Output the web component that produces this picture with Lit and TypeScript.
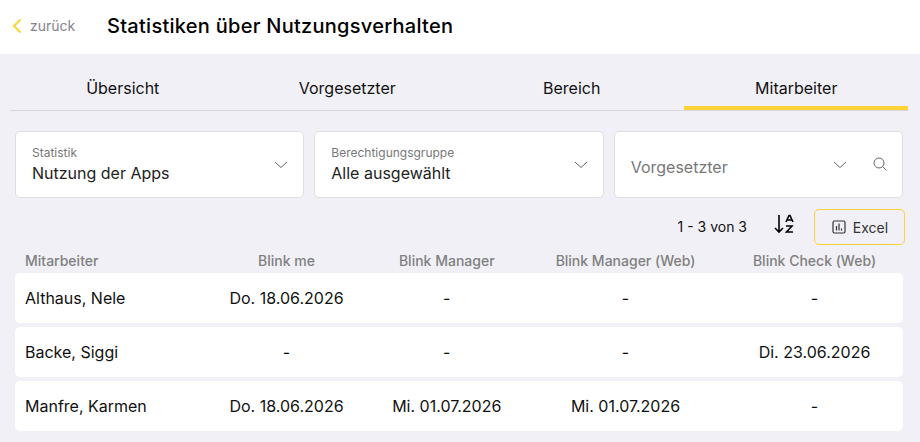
import { LitElement, html, css } from 'lit';
import { customElement } from 'lit/decorators.js';

@customElement('app-root')
export class AppRoot extends LitElement {
  private tabs = ['Übersicht', 'Vorgesetzter', 'Bereich', 'Mitarbeiter'];

  private columns = ['Mitarbeiter', 'Blink me', 'Blink Manager', 'Blink Manager (Web)', 'Blink Check (Web)'];

  private rows = [
    ['Althaus, Nele', 'Do. 18.06.2026', '-', '-', '-'],
    ['Backe, Siggi', '-', '-', '-', 'Di. 23.06.2026'],
    ['Manfre, Karmen', 'Do. 18.06.2026', 'Mi. 01.07.2026', 'Mi. 01.07.2026', '-'],
  ];

  static styles = css`
    :host {
      display: block;
      box-sizing: border-box;
      height: 442px;
      overflow: hidden;
      background: #f1f0f6;
      color: #111;
      font-family: Inter, 'Liberation Sans', sans-serif;
      font-size: 16px;
    }

    * {
      box-sizing: border-box;
    }

    svg {
      display: block;
      fill: none;
    }

    header {
      display: flex;
      align-items: center;
      height: 54px;
      padding: 0 12px 2px;
      background: #fff;
    }

    .back {
      display: flex;
      align-items: center;
      gap: 8px;
      width: 95px;
      padding-bottom: 1px;
      color: #84848c;
      font-size: 14px;
    }

    h1 {
      margin: 0;
      font-size: 20px;
      font-weight: 500;
      line-height: 24px;
      letter-spacing: 0.27px;
      color: #000;
    }

    nav {
      display: grid;
      grid-template-columns: repeat(4, 1fr);
      height: 57px;
      margin: 0 12px 0 10px;
      border-bottom: 1px solid #d5d5da;
    }

    .tab {
      display: flex;
      align-items: center;
      justify-content: center;
      height: 56px;
      padding: 12px 0 0 1px;
      border-bottom: 0 solid #ffd236;
    }

    .tab.active {
      padding-top: 16px;
      border-bottom-width: 4px;
    }

    .filters {
      display: grid;
      grid-template-columns: repeat(3, 1fr);
      gap: 10px;
      padding: 20px 17px 0 15px;
    }

    .field {
      display: flex;
      align-items: center;
      height: 67px;
      padding: 0 15px 0 16px;
      border: 1px solid #dfdfe1;
      border-radius: 5px;
      background: #fff;
    }

    .text {
      flex: 1;
    }

    .label {
      color: #777;
      font-size: 12px;
      line-height: 16px;
    }

    .value {
      color: #222;
      line-height: 24px;
    }

    .placeholder {
      flex: 1;
      padding-top: 5px;
      color: #777;
    }

    .search {
      margin: 0 -1px 2px 25px;
    }

    .toolbar {
      display: flex;
      align-items: center;
      justify-content: flex-end;
      height: 36px;
      margin-top: 11px;
      padding-right: 15px;
      font-size: 14px;
    }

    .count {
      padding-bottom: 2px;
    }

    .sort {
      margin: 0 20px 6px 27px;
    }

    .excel {
      display: flex;
      align-items: center;
      justify-content: center;
      gap: 7px;
      width: 91px;
      height: 36px;
      padding-left: 1px;
      border: 1px solid #ffd236;
      border-radius: 5px;
      color: #333;
    }

    .table {
      display: grid;
      gap: 4px;
      padding: 4px 17px 0 15px;
    }

    .row {
      display: grid;
      grid-template-columns: 191.5px 160px 160.5px 197px 179px;
      align-items: center;
      height: 50px;
      border-radius: 5px;
      background: #fff;
      text-align: center;
    }

    .row :first-child {
      padding-left: 10px;
      text-align: left;
    }

    .row :last-child {
      padding-left: 2px;
    }

    .row.head {
      height: 24px;
      margin-bottom: -4px;
      padding-bottom: 2px;
      background: none;
      color: #808080;
      font-size: 14px;
      font-weight: 500;
    }
  `;

  private _chevron() {
    return html`<svg width="14" height="8" viewBox="0 0 14 8" stroke="#666">
      <path d="M1 1l6 5.5L13 1" />
    </svg>`;
  }

  private _select(label: string, value: string) {
    return html`
      <div class="field">
        <div class="text">
          <div class="label">${label}</div>
          <div class="value">${value}</div>
        </div>
        ${this._chevron()}
      </div>
    `;
  }

  render() {
    return html`
      <header>
        <div class="back">
          <svg width="10" height="14" viewBox="0 0 10 14" stroke="#ffd236" stroke-width="2">
            <path d="M8.5 0.5L2 7l6.5 6.5" />
          </svg>
          zurück
        </div>
        <h1>Statistiken über Nutzungsverhalten</h1>
      </header>
      <nav>
        ${this.tabs.map((t) => html`<div class="tab ${t === 'Mitarbeiter' ? 'active' : ''}">${t}</div>`)}
      </nav>
      <div class="filters">
        ${this._select('Statistik', 'Nutzung der Apps')}
        ${this._select('Berechtigungsgruppe', 'Alle ausgewählt')}
        <div class="field">
          <div class="placeholder">Vorgesetzter</div>
          ${this._chevron()}
          <svg class="search" width="16" height="16" viewBox="0 0 16 16" stroke="#666">
            <circle cx="7" cy="7" r="5" />
            <path d="M10.5 10.5l4 4" />
          </svg>
        </div>
      </div>
      <div class="toolbar">
        <span class="count">1 - 3 von 3</span>
        <svg class="sort" width="20" height="20" viewBox="0 0 20 20" stroke="#000" stroke-width="1.6">
          <path d="M5 1v17M1 14l4 4 4-4M12 8l3-6.500h1l3 6.500M13 6h5M12 12h6l-5.500 6H19" />
        </svg>
        <div class="excel">
          <svg width="14" height="14" viewBox="0 0 14 14" stroke="#333" stroke-width="1.200">
            <rect x="1" y="1" width="12" height="12" rx="1.5" />
            <path d="M4.5 10.500V6M7 10.500V3.500M9.500 10.500V8.500" />
          </svg>
          Excel
        </div>
      </div>
      <div class="table">
        <div class="row head">${this.columns.map((c) => html`<div>${c}</div>`)}</div>
        ${this.rows.map((r) => html`<div class="row">${r.map((c) => html`<div>${c}</div>`)}</div>`)}
      </div>
    `;
  }
}
